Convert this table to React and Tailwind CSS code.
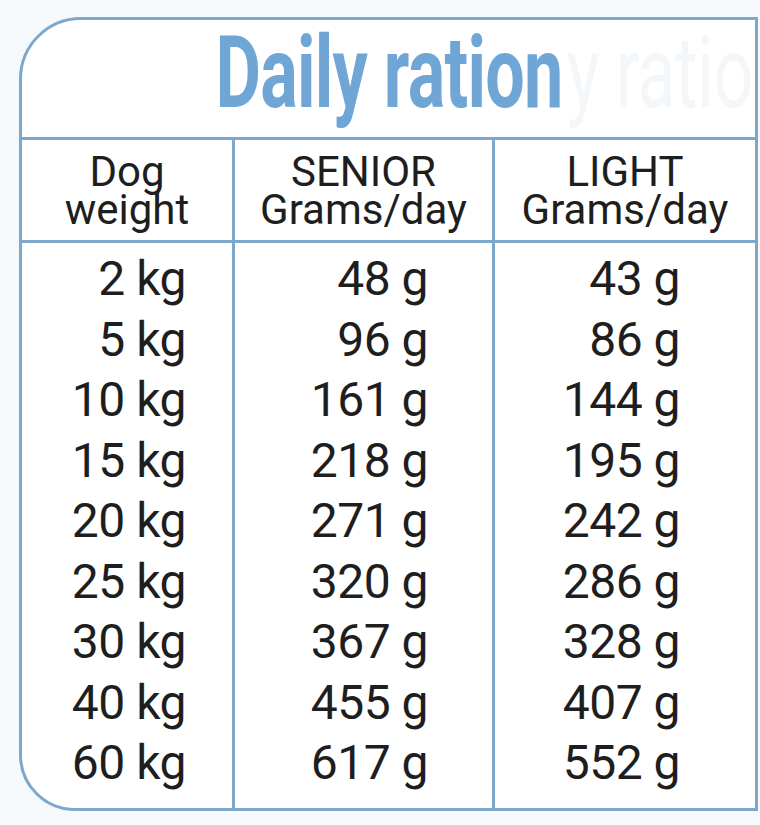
import React from "react";

const rows = [
  ["2 kg", "48 g", "43 g"],
  ["5 kg", "96 g", "86 g"],
  ["10 kg", "161 g", "144 g"],
  ["15 kg", "218 g", "195 g"],
  ["20 kg", "271 g", "242 g"],
  ["25 kg", "320 g", "286 g"],
  ["30 kg", "367 g", "328 g"],
  ["40 kg", "455 g", "407 g"],
  ["60 kg", "617 g", "552 g"],
];

export default function App() {
  return (
    <div
      className="w-[760px] h-[825px] bg-[#f6f9fc] pt-[17px] pl-[19px] overflow-hidden"
      style={{ fontFamily: "Roboto, 'Liberation Sans', sans-serif" }}
    >
      <div className="w-[739px] h-[794px] bg-white border-[3px] border-[#7ea8cb] rounded-tl-[62px] rounded-bl-[56px] flex flex-col text-[#1e1e1e]">
        {/* title */}
        <div className="h-[120px] flex items-center justify-center pb-3 border-b-[3px] border-[#7ea8cb] overflow-hidden">
          <span className="relative inline-block scale-x-[0.7] text-[100px] leading-none font-bold text-[#6fa6d6] tracking-[-1px]">
            Daily ration
            <span className="absolute left-full top-0 pl-[6px] whitespace-nowrap font-normal text-[#f4f7fa]">y ratio</span>
          </span>
        </div>

        {/* header */}
        <div className="grid grid-cols-[210px_260px_1fr] h-[103px] border-b-[3px] border-[#7ea8cb] text-[42px] leading-[38px] text-center">
          <div className="flex flex-col items-center justify-center pt-[2px]">
            <span>Dog</span>
            <span>weight</span>
          </div>
          <div className="flex flex-col items-center justify-center border-l-[3px] border-[#7ea8cb] pt-[2px]">
            <span>SENIOR</span>
            <span>Grams/day</span>
          </div>
          <div className="flex flex-col items-center justify-center border-l-[3px] border-[#7ea8cb] pt-[2px]">
            <span>LIGHT</span>
            <span>Grams/day</span>
          </div>
        </div>

        {/* body */}
        <div className="grid grid-cols-[210px_260px_1fr] flex-1 text-[48px] leading-[60.5px] tracking-[-0.5px]">
          <div className="flex flex-col items-end pr-[46px] pt-[6px]">
            {rows.map((r) => (
              <span key={r[0]}>{r[0]}</span>
            ))}
          </div>
          <div className="flex flex-col items-end pr-[64px] pt-[6px] border-l-[3px] border-[#7ea8cb]">
            {rows.map((r) => (
              <span key={r[0]}>{r[1]}</span>
            ))}
          </div>
          <div className="flex flex-col items-end pr-[75px] pt-[6px] border-l-[3px] border-[#7ea8cb]">
            {rows.map((r) => (
              <span key={r[0]}>{r[2]}</span>
            ))}
          </div>
        </div>
      </div>
    </div>
  );
}
